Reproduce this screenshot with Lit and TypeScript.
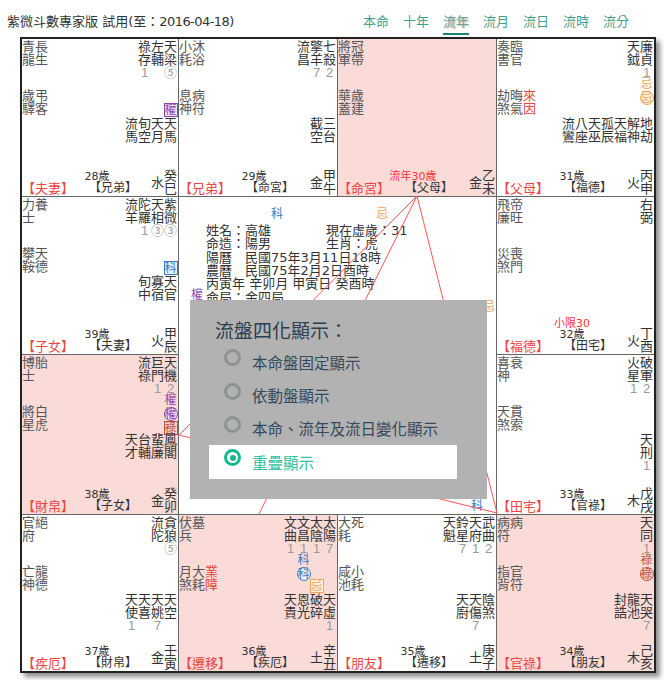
import { LitElement, html, css } from "lit";
import { customElement, state } from "lit/decorators.js";

interface Palace {
  pink?: boolean;
  tl: string[];
  ml: string[];
  mlRed?: string[];
  major: string[];
  hua?: string[][];
  minor: string[];
  label: string;
  age: string;
  ageRed?: string;
  limit?: string;
  palace: string;
  el: string;
  stem: string;
}

const COLON = "\uFF1A";
const IDEO = "\u3000";

const P: Record<string, Palace> = {
  si: { tl: ["青龍", "長生"], ml: ["歲驛", "弔客"], major: ["祿存:1", "左輔", "天梁:⑤"], hua: [["b權"]], minor: ["流馬", "旬空", "天月", "天馬"], label: "夫妻", age: "28歲", palace: "兄弟", el: "水", stem: "癸巳" },
  wu: { tl: ["小耗", "沐浴"], ml: ["息神", "病符"], major: ["流昌", "擎羊:7", "七殺:2"], minor: ["截空", "三台"], label: "兄弟", age: "29歲", palace: "命宮", el: "金", stem: "甲午" },
  wei: { pink: true, tl: ["將軍", "冠帶"], ml: ["華蓋", "歲建"], major: [], minor: [], label: "命宮", age: "", ageRed: "流年30歲", palace: "父母", el: "金", stem: "乙未" },
  shen: { tl: ["奏書", "臨官"], ml: ["劫煞", "晦氣"], mlRed: ["來因"], major: ["天鉞", "廉貞:1"], hua: [["p忌", "c忌"]], minor: ["流鸞", "八座", "天巫", "孤辰", "天福", "解神", "地劫"], label: "父母", age: "31歲", palace: "福德", el: "火", stem: "丙申" },
  chen: { tl: ["力士", "養"], ml: ["攀鞍", "天德"], major: ["流羊", "陀羅:1", "天相:③", "紫微:③"], hua: [["b科"]], minor: ["旬中", "寡宿", "天官"], label: "子女", age: "39歲", palace: "夫妻", el: "火", stem: "甲辰" },
  you: { tl: ["飛廉", "帝旺"], ml: ["災煞", "喪門"], major: ["右弼"], minor: [], label: "福德", age: "32歲", limit: "小限30", palace: "田宅", el: "火", stem: "丁酉" },
  mao: { pink: true, tl: ["博士", "胎"], ml: ["將星", "白虎"], major: ["流祿", "巨門:1", "天機:2"], hua: [["p權", "c權", "b祿"]], minor: ["天才", "台輔", "蜚廉", "鳳閣"], label: "財帛", age: "38歲", palace: "子女", el: "金", stem: "癸卯" },
  xu: { tl: ["喜神", "衰"], ml: ["天煞", "貫索"], major: ["火星:1", "破軍:2"], minor: ["天刑:1"], label: "田宅", age: "33歲", palace: "官祿", el: "木", stem: "戊戌" },
  yin: { tl: ["官府", "絕"], ml: ["亡神", "龍德"], major: ["流陀", "貪狼:⑤"], minor: ["天使:1", "天喜", "天姚:7", "天空"], label: "疾厄", age: "37歲", palace: "財帛", el: "金", stem: "壬寅" },
  chou: { pink: true, tl: ["伏兵", "墓"], ml: ["月煞", "大耗"], mlRed: ["業障"], major: ["文曲:1", "文昌:1", "太陰:1", "太陽:7"], hua: [[], ["b忌"], ["p科", "c科"]], minor: ["天貴", "恩光", "破碎", "天虛:1"], label: "遷移", age: "36歲", palace: "疾厄", el: "土", stem: "辛丑" },
  zi: { tl: ["大耗", "死"], ml: ["咸池", "小耗"], major: ["天魁", "鈴星:7", "天府:1", "武曲:2"], minor: ["天廚", "天傷:7", "陰煞"], label: "朋友", age: "35歲", palace: "遷移", el: "土", stem: "庚子" },
  hai: { pink: true, tl: ["病符", "病"], ml: ["指背", "官符"], major: ["天同:1"], hua: [["p祿", "c祿"]], minor: ["封誥", "龍池", "天哭:7"], label: "官祿", age: "34歲", palace: "朋友", el: "木", stem: "己亥" },
};

const HUA: Record<string, string> = { 權: "quan", 科: "ke", 忌: "ji", 祿: "lu" };
const TABS = ["本命", "十年", "流年", "流月", "流日", "流時", "流分"];
const OPTIONS = ["本命盤固定顯示", "依動盤顯示", "本命、流年及流日變化顯示", "重疊顯示"];

@customElement("app-root")
export class AppRoot extends LitElement {
  @state() private tab = 2;
  @state() private option = 3;

  static styles = css`
    :host {
      display: block;
      width: 664px;
      height: 680px;
      overflow: hidden;
      background: #fff;
      font-family: "Liberation Sans", "Noto Sans CJK TC", sans-serif;
      color: #333;
    }
    .header {
      display: flex;
      align-items: flex-start;
      height: 37px;
      padding: 0 35px 0 7px;
      box-sizing: border-box;
    }
    .title {
      font-family: "DejaVu Sans", "Noto Sans CJK TC", sans-serif;
      font-size: 13px;
      line-height: 15px;
      margin-top: 14px;
      white-space: pre;
      color: #333;
    }
    .date {
      letter-spacing: -0.55px;
    }
    .tabs {
      display: flex;
      gap: 14px;
      margin-left: auto;
      margin-top: 12px;
    }
    .tab {
      font-size: 13px;
      line-height: 19px;
      height: 23px;
      width: 26px;
      text-align: center;
      color: #3f9f8a;
      box-sizing: border-box;
    }
    .tab.on {
      color: #6da797;
      border-bottom: 2px solid #16876c;
      text-shadow: 1px 1px 2px #aaa;
    }
    .board {
      position: relative;
      width: 636px;
      height: 636px;
      margin-left: 20px;
      box-sizing: border-box;
      border: 2px solid #222;
      box-shadow: 4px 4px 5px rgba(0, 0, 0, 0.45);
      background: #fff;
      display: grid;
      grid-template-columns: 157px 159px 159px 157px;
      grid-template-rows: 158px 158px 160px 156px;
    }
    .cell {
      display: flex;
      flex-direction: column;
      box-sizing: border-box;
      padding: 1px 0 1px 0;
      border-right: 1px solid #666;
      border-bottom: 1px solid #666;
      overflow: hidden;
      font-size: 13px;
      line-height: 13px;
      min-width: 0;
    }
    .cell.pink {
      background: #fadbd8;
    }
    .cell.last-col {
      border-right: none;
    }
    .cell.last-row {
      border-bottom: none;
    }
    .main {
      display: flex;
      flex: 1;
      min-height: 0;
      padding-right: 1px;
    }
    .left {
      display: flex;
      flex-direction: column;
      color: #555;
    }
    .left .pair {
      display: flex;
      height: 26px;
    }
    .left .pair + .pair {
      margin-top: 23px;
    }
    .v {
      width: 13px;
      word-break: break-all;
      flex: none;
    }
    .red {
      color: #e8443a;
    }
    .right {
      margin-left: auto;
      display: flex;
      flex-direction: column;
      align-items: flex-end;
    }
    .stars {
      display: flex;
      justify-content: flex-end;
      color: #333;
    }
    .stars.major {
      height: 38px;
    }
    .col {
      width: 13px;
      display: flex;
      flex-direction: column;
      align-items: center;
    }
    .name {
      height: 26px;
      width: 13px;
      word-break: break-all;
    }
    .num {
      height: 12px;
      line-height: 14px;
      font-size: 13px;
      color: #9a9a9a;
      white-space: nowrap;
    }
    .strip {
      display: flex;
      justify-content: flex-end;
      height: 39px;
    }
    .hcol {
      width: 13px;
      display: flex;
      flex-direction: column;
      align-items: center;
    }
    .h {
      width: 13px;
      height: 13px;
      flex: none;
      font-size: 12px;
      line-height: 13px;
      text-align: center;
      box-sizing: border-box;
    }
    .h.b {
      margin-top: auto;
      width: 14px;
      height: 14px;
      border: 1px solid currentColor;
      line-height: 12px;
    }
    .h.c {
      width: 14px;
      height: 14px;
      border: 1px solid currentColor;
      border-radius: 50%;
      line-height: 12px;
    }
    .quan { color: #8e44ad; }
    .quan.b, .quan.c { background: #efe4f6; }
    .ke { color: #3b7dc4; }
    .ke.b, .ke.c { background: #e6f0fa; }
    .ji { color: #f2a457; }
    .ji.b, .ji.c { background: #fdf1e4; }
    .lu { color: #c0503a; }
    .lu.b, .lu.c { background: #f6d3ca; }
    .bottom {
      display: flex;
      align-items: flex-end;
      padding-right: 1px;
    }
    .label {
      width: 51px;
      flex: none;
      color: #ee4444;
      font-size: 13px;
      text-align: center;
      white-space: nowrap;
      line-height: 13px;
    }
    .ages {
      width: 64px;
      flex: none;
      display: flex;
      flex-direction: column;
      align-items: flex-start;
    }
    .age {
      width: 48px;
      text-align: center;
      white-space: nowrap;
      height: 11px;
      line-height: 12px;
      font-size: 11px;
      font-family: "DejaVu Sans", "Noto Sans CJK TC", sans-serif;
      color: #333;
    }
    .age.alert {
      color: #f33;
    }
    .pal {
      align-self: flex-end;
      width: 48px;
      text-align: center;
      white-space: nowrap;
      font-size: 12px;
      line-height: 13px;
    }
    .el {
      margin-left: auto;
      width: 13px;
      margin-bottom: 6px;
    }
    .stem {
      width: 13px;
      word-break: break-all;
    }
    .center {
      grid-column: 2 / 4;
      grid-row: 2 / 4;
      position: relative;
      border-right: 1px solid #666;
      border-bottom: 1px solid #666;
      box-sizing: border-box;
      padding: 27px 0 0 27px;
      font-family: "DejaVu Sans", "Noto Sans CJK TC", sans-serif;
      font-size: 13px;
      line-height: 13.33px;
      color: #333;
    }
    .info {
      display: grid;
      grid-template-columns: 120px auto;
      justify-content: start;
    }
    .info .wide {
      grid-column: 1 / 3;
      white-space: pre;
    }
    .tag {
      position: absolute;
      font-size: 12px;
      line-height: 13px;
    }
    .t1 { left: 92px; top: 11px; }
    .t2 { left: 197px; top: 11px; }
    .t3 { left: 12px; top: 92px; }
    .t4 { left: 304px; top: 104px; }
    .t5 { left: 292px; top: 303px; }
    .rays {
      position: absolute;
      left: -2px;
      top: -2px;
      width: 636px;
      height: 636px;
      pointer-events: none;
    }
    .modal {
      position: absolute;
      left: 168px;
      top: 261px;
      width: 297px;
      height: 199px;
      box-sizing: border-box;
      background: #b2b2b2;
      padding: 20px 30px 21px 19px;
      display: flex;
      flex-direction: column;
    }
    .modal h2 {
      margin: 0 0 1px 6px;
      font-weight: 400;
      font-size: 19px;
      line-height: 24px;
      color: #2c3e50;
    }
    .opt {
      display: flex;
      align-items: center;
      height: 33.4px;
      flex: none;
      padding-left: 15px;
      gap: 11px;
      font-size: 15.5px;
      color: #34495e;
      white-space: nowrap;
    }
    .opt.on {
      background: #fff;
      color: #30c29e;
    }
    .radio {
      width: 17px;
      height: 17px;
      box-sizing: border-box;
      border: 3px solid #8d9295;
      border-radius: 50%;
      margin-bottom: 8px;
      flex: none;
      display: flex;
      align-items: center;
      justify-content: center;
    }
    .opt.on .radio {
      border-color: #16b894;
    }
    .opt.on .radio::after {
      content: "";
      width: 6px;
      height: 6px;
      border-radius: 50%;
      background: #16b894;
    }
  `;

  private starCol(s: string) {
    const [n, d] = s.split(":");
    return html`<div class="col"><div class="name">${n}</div>${d ? html`<div class="num">${d}</div>` : ""}</div>`;
  }

  private huaStrip(h: string[][] = []) {
    const cols = [...h].reverse();
    return html`<div class="strip">
      ${cols.map(
        (c) => html`<div class="hcol">
          ${c.map((x) => html`<div class="h ${x[0]} ${HUA[x[1]]}">${x[1]}</div>`)}
        </div>`
      )}
    </div>`;
  }

  private cell(key: string, cls = "") {
    const p = P[key];
    return html`<div class="cell ${p.pink ? "pink" : ""} ${cls}">
      <div class="main">
        <div class="left">
          <div class="pair">${p.tl.map((s) => html`<div class="v">${s}</div>`)}</div>
          <div class="pair">
            ${p.ml.map((s) => html`<div class="v">${s}</div>`)}
            ${(p.mlRed ?? []).map((s) => html`<div class="v red">${s}</div>`)}
          </div>
        </div>
        <div class="right">
          <div class="stars major">${p.major.map((s) => this.starCol(s))}</div>
          ${this.huaStrip(p.hua)}
          <div class="stars">${p.minor.map((s) => this.starCol(s))}</div>
        </div>
      </div>
      <div class="bottom">
        <div class="label">【${p.label}】</div>
        <div class="ages">
          ${p.limit ? html`<div class="age alert">${p.limit}</div>` : ""}
          ${p.ageRed
            ? html`<div class="age alert">${p.ageRed}</div>`
            : html`<div class="age">${p.age}</div>`}
          <div class="pal">【${p.palace}】</div>
        </div>
        <div class="el">${p.el}</div>
        <div class="stem">${p.stem}</div>
      </div>
    </div>`;
  }

  render() {
    return html`
      <div class="header">
        <div class="title">紫微斗數專家版 試用(至${COLON}<span class="date">2016-04-18</span>)</div>
        <div class="tabs">
          ${TABS.map(
            (t, i) => html`<div class="tab ${i === this.tab ? "on" : ""}" @click=${() => (this.tab = i)}>${t}</div>`
          )}
        </div>
      </div>
      <div class="board">
        ${this.cell("si")}${this.cell("wu")}${this.cell("wei")}${this.cell("shen", "last-col")}
        ${this.cell("chen")}
        <div class="center">
          <div class="info">
            <div>姓名${COLON}高雄</div><div>現在虛歲${COLON}31</div>
            <div>命造${COLON}陽男</div><div>生肖${COLON}虎</div>
            <div class="wide">陽曆${IDEO}民國75年3月11日18時</div>
            <div class="wide">農曆${IDEO}民國75年2月2日酉時</div>
            <div class="wide">丙寅年 辛卯月 甲寅日 癸酉時</div>
            <div class="wide">命局${COLON}金四局</div>
          </div>
          <span class="tag ke t1">科</span>
          <span class="tag ji t2">忌</span>
          <span class="tag quan t3">權</span>
          <span class="tag ji t4">忌</span>
          <span class="tag ke t5">科</span>
        </div>
        ${this.cell("you", "last-col")}
        ${this.cell("mao")}
        ${this.cell("xu", "last-col")}
        ${this.cell("yin", "last-row")}${this.cell("chou", "last-row")}${this.cell("zi", "last-row")}${this.cell("hai", "last-row last-col")}
        <svg class="rays" viewBox="0 0 636 636">
          <g stroke="#f55" stroke-width="1" fill="none">
            <polygon points="397,159 159,398 477,476"></polygon>
            <line x1="397" y1="159" x2="239" y2="477"></line>
          </g>
        </svg>
        <div class="modal">
          <h2>流盤四化顯示${COLON}</h2>
          ${OPTIONS.map(
            (o, i) => html`<div class="opt ${i === this.option ? "on" : ""}" @click=${() => (this.option = i)}>
              <span class="radio"></span><span>${o}</span>
            </div>`
          )}
        </div>
      </div>
    `;
  }
}
